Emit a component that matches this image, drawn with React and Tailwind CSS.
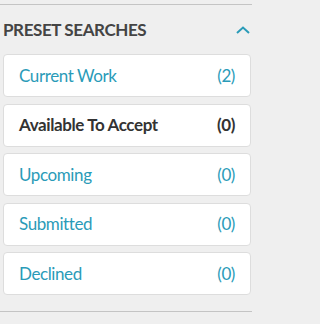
import React from "react";

const searches = [
  { label: "Current Work", count: 2 },
  { label: "Available To Accept", count: 0, active: true },
  { label: "Upcoming", count: 0 },
  { label: "Submitted", count: 0 },
  { label: "Declined", count: 0 },
];

function App() {
  return (
    <div
      className="bg-[#efefef] w-full min-h-screen overflow-hidden"
      style={{ fontFamily: "Lato, 'Open Sans', sans-serif" }}
    >
      <div className="w-[252px] pt-[4px]">
        <div className="h-[1px] bg-[#c4c4c4]"></div>

        {/* Header */}
        <div className="flex items-center justify-between pl-[3px] pr-[1px] h-[49px]">
          <h2 className="text-[17px] font-bold text-[#444] tracking-[-0.4px]">
            PRESET SEARCHES
          </h2>
          <svg width="14" height="8" viewBox="0 0 14 8" className="mr-[1px]">
            <path d="M1 7 L7 1.5 L13 7" fill="none" stroke="#2a9bb8" strokeWidth="2" />
          </svg>
        </div>

        {/* Cards */}
        <div className="flex flex-col gap-[6.5px] pl-[3px] pr-[1px]">
          {searches.map((s) => (
            <div
              key={s.label}
              className={
                "flex items-center justify-between h-[43px] bg-white border border-[#dddddd] rounded-[4px] pl-[15px] pr-[15px] text-[17px] tracking-[-0.4px] " +
                (s.active ? "font-bold text-[#333]" : "text-[#2a9bb8]")
              }
            >
              <span>{s.label}</span>
              <span>({s.count})</span>
            </div>
          ))}
        </div>

        <div className="h-[1px] bg-[#c4c4c4] mt-[16px]"></div>
      </div>
    </div>
  );
}

export default App;
